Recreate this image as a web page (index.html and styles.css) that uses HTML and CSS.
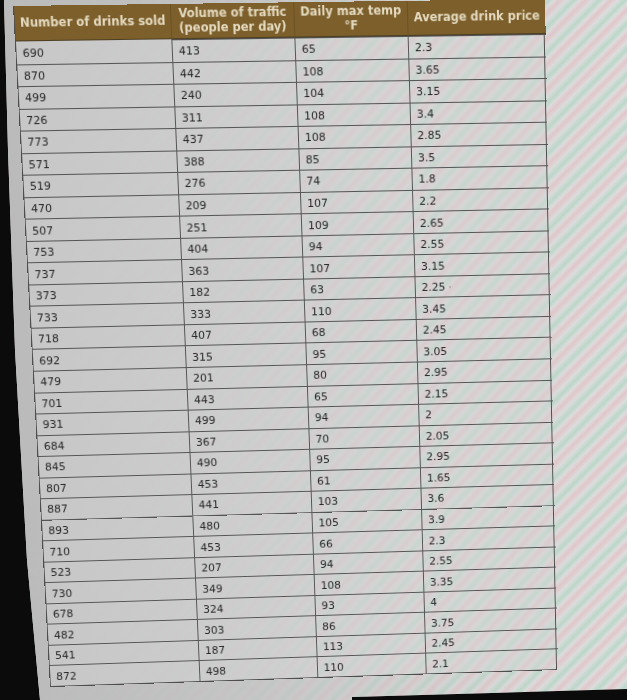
FILE: index.html
```html
<!DOCTYPE html>
<html lang="en">
<head>
<meta charset="utf-8">
<title>Drinks sold data</title>
<link rel="stylesheet" href="styles.css">
</head>
<body>
<div class="screen">
  <div class="sheet">
    <div class="cell head">Number of drinks sold</div>
    <div class="cell head">Volume of traffic<br>(people per day)</div>
    <div class="cell head">Daily max temp<br>°F</div>
    <div class="cell head">Average drink price</div>

    <div class="cell">690</div><div class="cell">413</div><div class="cell">65</div><div class="cell">2.3</div>
    <div class="cell">870</div><div class="cell">442</div><div class="cell">108</div><div class="cell">3.65</div>
    <div class="cell">499</div><div class="cell">240</div><div class="cell">104</div><div class="cell">3.15</div>
    <div class="cell">726</div><div class="cell">311</div><div class="cell">108</div><div class="cell">3.4</div>
    <div class="cell">773</div><div class="cell">437</div><div class="cell">108</div><div class="cell">2.85</div>
    <div class="cell">571</div><div class="cell">388</div><div class="cell">85</div><div class="cell">3.5</div>
    <div class="cell">519</div><div class="cell">276</div><div class="cell">74</div><div class="cell">1.8</div>
    <div class="cell">470</div><div class="cell">209</div><div class="cell">107</div><div class="cell">2.2</div>
    <div class="cell">507</div><div class="cell">251</div><div class="cell">109</div><div class="cell">2.65</div>
    <div class="cell">753</div><div class="cell">404</div><div class="cell">94</div><div class="cell">2.55</div>
    <div class="cell">737</div><div class="cell">363</div><div class="cell">107</div><div class="cell">3.15</div>
    <div class="cell">373</div><div class="cell">182</div><div class="cell">63</div><div class="cell">2.25 <span class="dot">·</span></div>
    <div class="cell">733</div><div class="cell">333</div><div class="cell">110</div><div class="cell">3.45</div>
    <div class="cell">718</div><div class="cell">407</div><div class="cell">68</div><div class="cell">2.45</div>
    <div class="cell">692</div><div class="cell">315</div><div class="cell">95</div><div class="cell">3.05</div>
    <div class="cell">479</div><div class="cell">201</div><div class="cell">80</div><div class="cell">2.95</div>
    <div class="cell">701</div><div class="cell">443</div><div class="cell">65</div><div class="cell">2.15</div>
    <div class="cell">931</div><div class="cell">499</div><div class="cell">94</div><div class="cell">2</div>
    <div class="cell">684</div><div class="cell">367</div><div class="cell">70</div><div class="cell">2.05</div>
    <div class="cell">845</div><div class="cell">490</div><div class="cell">95</div><div class="cell">2.95</div>
    <div class="cell">807</div><div class="cell">453</div><div class="cell">61</div><div class="cell">1.65</div>
    <div class="cell">887</div><div class="cell">441</div><div class="cell">103</div><div class="cell">3.6</div>
    <div class="cell">893</div><div class="cell">480</div><div class="cell">105</div><div class="cell">3.9</div>
    <div class="cell">710</div><div class="cell">453</div><div class="cell">66</div><div class="cell">2.3</div>
    <div class="cell">523</div><div class="cell">207</div><div class="cell">94</div><div class="cell">2.55</div>
    <div class="cell">730</div><div class="cell">349</div><div class="cell">108</div><div class="cell">3.35</div>
    <div class="cell">678</div><div class="cell">324</div><div class="cell">93</div><div class="cell">4</div>
    <div class="cell">482</div><div class="cell">303</div><div class="cell">86</div><div class="cell">3.75</div>
    <div class="cell">541</div><div class="cell">187</div><div class="cell">113</div><div class="cell">2.45</div>
    <div class="cell">872</div><div class="cell">498</div><div class="cell">110</div><div class="cell">2.1</div>
  </div>
</div>
</body>
</html>
```

FILE: styles.css
```css
html, body {
  margin: 0;
  padding: 0;
}
body {
  background: #0b0b0b;
  width: 627px;
  height: 700px;
  overflow: hidden;
}
.screen {
  width: 627px;
  height: 700px;
  background:
    linear-gradient(to right, rgba(186,186,186,1) 0%, rgba(194,194,194,0.85) 40%, rgba(205,205,205,0.2) 85%, rgba(210,210,210,0.05) 100%),
    repeating-linear-gradient(135deg, #e3c5c9 0px, #dedede 5px, #b8d8c8 10px, #dedede 14px, #e3c5c9 18px);
  clip-path: polygon(4px 0, 627px 0, 627px 689px, 352px 697px, 352px 700px, 40px 700px, 27px 560px, 15px 350px, 8px 150px);
}
.sheet {
  width: 531px;
  height: 681px;
  box-sizing: border-box;
  display: grid;
  grid-template-columns: 155px 123px 114px 139px;
  grid-template-rows: 34px repeat(30, 1fr);
  border-left: 1px solid #4e4e4e;
  border-right: 1px solid #4e4e4e;
  border-bottom: 1px solid #4e4e4e;
  background:
    linear-gradient(to right, rgba(199,199,199,1) 0%, rgba(204,204,204,0.9) 35%, rgba(210,210,210,0.5) 70%, rgba(214,214,214,0.3) 100%),
    repeating-linear-gradient(135deg, #dec6c9 0px, #d8d8d8 5px, #bed7ca 10px, #d8d8d8 14px, #dec6c9 18px);
  transform-origin: 0 0;
  transform: matrix3d(1.016486, -0.013213, 0, 0.0000303051, 0.057777, 1.047338, 0, 0.0000689045, 0, 0, 1, 0, 13, 6, 0, 1);
  font-family: "DejaVu Sans", Verdana, sans-serif;
  font-size: 11px;
  color: #262626;
}
.cell {
  box-sizing: border-box;
  display: flex;
  align-items: center;
  padding: 1px 0 0 6px;
  border-right: 1px solid #555;
  border-top: 1px solid #555;
  white-space: nowrap;
}
.cell:nth-child(4n) {
  border-right: none;
}
.head {
  background: #7c5f2b;
  color: #e4dac0;
  font-weight: bold;
  font-size: 11.5px;
  line-height: 14px;
  justify-content: center;
  text-align: center;
  padding: 0 2px 2px 2px;
  border-top: none;
  border-right: 1px solid #6b5124;
  border-bottom: 1px solid #4d3f24;
}
.head:nth-child(4) {
  border-right: none;
}
.head + .cell:not(.head) {
  border-top: none;
}
.dot {
  color: #777;
  padding-left: 3px;
}
```
